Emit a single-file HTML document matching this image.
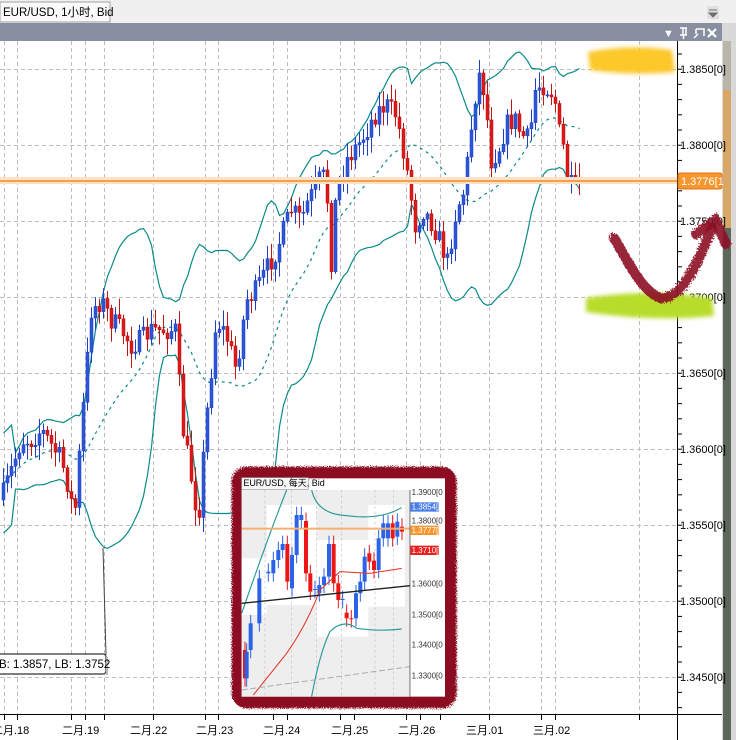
<!DOCTYPE html>
<html><head><meta charset="utf-8"><style>
html,body{margin:0;padding:0;width:736px;height:740px;overflow:hidden;background:#fff;font-family:"Liberation Sans","Noto Sans CJK SC",sans-serif}
svg{display:block}
text{font-family:"Liberation Sans","Noto Sans CJK SC",sans-serif}
</style></head><body>
<svg id="s" width="736" height="740" viewBox="0 0 736 740" xmlns="http://www.w3.org/2000/svg">
<defs>
<filter id="rough" x="-10%" y="-10%" width="120%" height="120%"><feTurbulence type="fractalNoise" baseFrequency="0.6" numOctaves="2" seed="3"/><feDisplacementMap in="SourceGraphic" scale="6"/></filter>
<filter id="rough2" x="-10%" y="-10%" width="120%" height="120%"><feTurbulence type="fractalNoise" baseFrequency="0.35" numOctaves="2" seed="5"/><feDisplacementMap in="SourceGraphic" scale="22"/></filter>
<filter id="blur"><feGaussianBlur stdDeviation="2"/></filter>
</defs>
<rect x="0" y="0" width="736" height="23" fill="#f0f0f0"/>
<rect x="0" y="2" width="110" height="20" fill="#fafafa" stroke="#a0a0a0"/>
<text x="3" y="16" font-size="11.5" fill="#000">EUR/USD, 1小时, Bid</text>
<rect x="707" y="6" width="12" height="13" fill="#e0e0e0"/>
<path d="M709 10h8M709 13h8l-4 4z" stroke="#707070" fill="#707070"/>
<rect x="0" y="23" width="724" height="18" fill="#878fa0"/>
<text x="663" y="37" font-size="11" fill="#fff">▼</text>
<path d="M680 28h7M683 28v7M686 28v7M680 35h7M683.5 35v4" stroke="#fff" stroke-width="1.5" fill="none"/>
<path d="M696 29h8v7M696 29v5M694 38l4-4" stroke="#fff" stroke-width="1.5" fill="none"/>
<path d="M708 29l8 8M716 29l-8 8" stroke="#fff" stroke-width="2.2"/>
<rect x="722" y="23" width="14" height="717" fill="#d8d8d8"/>
<rect x="723" y="41" width="8" height="699" fill="#5e675c"/>
<rect x="723" y="41" width="8" height="50" fill="#b8b5ab"/>
<rect x="723" y="90" width="8" height="138" fill="#d9a765"/>
<g id="grid" stroke="#bdbdbd" stroke-dasharray="4,3" stroke-width="1"></g>
<g id="bands" fill="none" stroke="#0a8a88" stroke-width="1.2"></g>
<g id="candles"></g>
<rect x="0" y="177" width="678" height="7" fill="#fde0c8"/>
<line x1="0" y1="181" x2="678" y2="181" stroke="#f08a1c" stroke-width="1.5"/>
<line x1="677.5" y1="41" x2="677.5" y2="740" stroke="#000"/>
<line x1="0" y1="714.5" x2="722" y2="714.5" stroke="#000"/>
<g id="ticks" stroke="#000"></g>
<g font-size="11" fill="#000">
<text x="680" y="73">1.3850[0]</text>
<text x="680" y="149">1.3800[0]</text>
<text x="680" y="225">1.3750[0]</text>
<text x="680" y="301">1.3700[0]</text>
<text x="680" y="377">1.3650[0]</text>
<text x="680" y="453">1.3600[0]</text>
<text x="680" y="529">1.3550[0]</text>
<text x="680" y="605">1.3500[0]</text>
<text x="680" y="681">1.3450[0]</text>
</g>
<rect x="678" y="173" width="44" height="16" rx="2" fill="#f5962e" stroke="#e07410"/>
<text x="681" y="185" font-size="11" fill="#fff">1.3776[1</text>
<g font-size="11" fill="#000">
<text x="-8" y="734">二月.18</text>
<text x="62" y="734">二月.19</text>
<text x="130" y="734">二月.22</text>
<text x="196" y="734">二月.23</text>
<text x="263" y="734">二月.24</text>
<text x="331" y="734">二月.25</text>
<text x="398" y="734">二月.26</text>
<text x="466" y="734">三月.01</text>
<text x="533" y="734">三月.02</text>
</g>
<line x1="103" y1="548" x2="106" y2="655" stroke="#444"/>
<rect x="-6" y="654" width="112" height="20" rx="3" fill="#fff" stroke="#333" stroke-width="1.2"/>
<rect x="106" y="657" width="2" height="18" fill="#bbb"/>
<text x="-1" y="668" font-size="11.5" fill="#000">B: 1.3857, LB: 1.3752</text>
<g filter="url(#blur)">
<path d="M588 52 Q630 44 672 50 L675 72 Q630 76 590 70 Z" fill="#fcc82a"/>
<path d="M586 298 Q650 288 712 298 L714 316 Q650 322 586 312 Z" fill="#b8dc2a"/>
</g>
<g filter="url(#rough)">
<path d="M614 238 C625 255 640 290 660 298 C680 300 695 270 712 228" fill="none" stroke="#8c0a22" stroke-width="10" stroke-linecap="round" opacity="0.9"/>
<path d="M696 234 L715 220 L726 244" fill="none" stroke="#8c0a22" stroke-width="10" stroke-linecap="round" opacity="0.9"/>
</g>
<g transform="translate(230,465) scale(0.3333)">
<rect x="5" y="5" width="675" height="725" rx="45" fill="#8c0a22" filter="url(#rough2)"/>
<rect x="35" y="40" width="610" height="655" fill="#fff"/>
<rect x="35" y="75" width="505" height="620" fill="#eeeeee"/>
<rect x="110" y="120" width="150" height="300" fill="#fff"/>
<rect x="260" y="225" width="155" height="290" fill="#fff"/>
<rect x="35" y="280" width="75" height="170" fill="#fff"/>
<rect x="415" y="120" width="110" height="305" fill="#fff"/>
<g stroke="#c0c0c0" stroke-dasharray="8,8" stroke-width="2">
<line x1="105" y1="75" x2="105" y2="695"/><line x1="185" y1="75" x2="185" y2="695"/><line x1="260" y1="75" x2="260" y2="695"/><line x1="335" y1="75" x2="335" y2="695"/><line x1="435" y1="75" x2="435" y2="695"/><line x1="490" y1="75" x2="490" y2="695"/>
</g>
<rect x="35" y="38" width="200" height="35" fill="#f6f6f6" stroke="#999" stroke-width="2"/>
<text x="40" y="63" font-size="27" fill="#000">EUR/USD, 每天, Bid</text>
<g id="inset"></g>
<path d="M35 445 Q120 200 170 75" fill="none" stroke="#2a9a98" stroke-width="3.5"/>
<path d="M245 75 Q260 140 330 150 L380 155 Q460 160 515 128" fill="none" stroke="#2a9a98" stroke-width="3.5"/>
<path d="M245 695 Q270 560 300 500 Q340 460 380 490 Q450 500 515 492" fill="none" stroke="#2a9a98" stroke-width="3.5"/>
<path d="M70 690 L170 565 Q230 480 270 375 L330 320 L420 325 L515 310" fill="none" stroke="#e03020" stroke-width="3"/>
<path d="M35 415 L540 362" stroke="#222" stroke-width="4"/>
<path d="M35 675 L540 605" stroke="#aaa" stroke-width="3" stroke-dasharray="18,8"/>
<rect x="35" y="188" width="505" height="6" fill="#f5b070"/>
<line x1="540" y1="75" x2="540" y2="695" stroke="#333" stroke-width="2"/>
<g font-size="24" fill="#333">
<text x="545" y="90">1.3900[0</text><text x="545" y="175">1.3800[0</text><text x="545" y="365">1.3600[0</text><text x="545" y="458">1.3500[0</text><text x="545" y="548">1.3400[0</text><text x="545" y="640">1.3300[0</text>
</g>
<rect x="541" y="112" width="85" height="28" fill="#4a7fe8"/><text x="545" y="134" font-size="24" fill="#fff">1.3854[8</text>
<rect x="541" y="182" width="85" height="28" fill="#f5962e"/><text x="545" y="204" font-size="24" fill="#fff">1.3777[1</text>
<rect x="541" y="242" width="85" height="28" fill="#e82020"/><text x="545" y="264" font-size="24" fill="#fff">1.3710[7</text>
</g>
</svg>
<script>
var NS="http://www.w3.org/2000/svg";
function el(p,t,a){var e=document.createElementNS(NS,t);for(var k in a)e.setAttribute(k,a[k]);p.appendChild(e);return e;}
var g=document.getElementById('grid');
[4,17,71,85,104,153,205,218,273,287,340,354,406,420,440,489,541,555,639].forEach(function(x){el(g,'line',{x1:x+.5,y1:41,x2:x+.5,y2:714});});
[69,145,221,297,373,449,525,601,677].forEach(function(y){el(g,'line',{x1:0,y1:y+.5,x2:677,y2:y+.5});});
var tk=document.getElementById('ticks');
for(var y=54;y<714;y+=15.2)el(tk,'line',{x1:677,y1:y,x2:682,y2:y});
[4,17,71,85,104,153,205,218,273,287,340,354,406,420,440,489,541,555,639].forEach(function(x){el(tk,'line',{x1:x+.5,y1:714,x2:x+.5,y2:720});});
var kp=[[0,500],[10,470],[20,440],[30,440],[40,430],[50,445],[60,460],[68,490],[73,520],[80,430],[90,310],[100,300],[110,320],[120,330],[130,345],[140,340],[150,330],[165,330],[175,330],[180,420],[188,465],[197,520],[205,420],[215,320],[225,335],[235,370],[245,300],[255,290],[265,270],[275,250],[290,210],[300,220],[305,205],[318,180],[325,175],[329,275],[335,190],[345,160],[360,140],[375,112],[385,105],[395,115],[405,165],[414,225],[422,210],[432,225],[440,245],[446,262],[455,210],[463,190],[469,135],[474,95],[479,70],[484,100],[490,160],[497,150],[505,125],[513,118],[520,135],[528,140],[534,90],[540,83],[548,90],[553,95],[559,140],[563,150],[567,185],[574,188],[580,182]];
function interp(x){for(var i=1;i<kp.length;i++){if(x<=kp[i][0]){var a=kp[i-1],b=kp[i];return a[1]+(b[1]-a[1])*(x-a[0])/(b[0]-a[0]);}}return kp[kp.length-1][1];}
var seed=7;function r(){seed=(seed*16807)%2147483647;return seed/2147483647;}
var cg=document.getElementById('candles');var closes=[],xs=[];var prev=interp(0);
for(var x=2;x<=578;x+=4){var c=interp(x)+(r()-.5)*22;var o=prev;var hi=Math.min(o,c)-r()*14-2,lo=Math.max(o,c)+r()*14+2;var up=c<o;
el(cg,'line',{x1:x+1.5,y1:hi,x2:x+1.5,y2:lo,stroke:up?'#1f3fc0':'#c01515','stroke-width':1});
el(cg,'rect',{x:x,y:Math.min(o,c),width:3,height:Math.max(1,Math.abs(c-o)),fill:up?'#2b56d8':'#e01818',stroke:up?'#1f3fc0':'#b01010','stroke-width':.5});
closes.push(c);xs.push(x+1.5);prev=c;}
var bg=document.getElementById('bands');var P=20,u='',l='',m='';
for(var i=0;i<closes.length;i++){var n=Math.min(P,i+1),s=0;for(var j=i-n+1;j<=i;j++)s+=closes[j];var mean=s/n,v=0;for(j=i-n+1;j<=i;j++)v+=(closes[j]-mean)*(closes[j]-mean);var sd=Math.sqrt(v/n);if(i<3)sd=25;
var pre=i?'L':'M';u+=pre+xs[i]+' '+(mean-2*sd).toFixed(1);l+=pre+xs[i]+' '+(mean+2*sd).toFixed(1);m+=pre+xs[i]+' '+mean.toFixed(1);}
el(bg,'path',{d:u});el(bg,'path',{d:l});el(bg,'path',{d:m,'stroke-dasharray':'3,4'});
var ins=document.getElementById('inset');
var ic=[[45,555,640,0],[50,640,560,1],[62,555,475,1],[88,475,340,1],[115,325,320,1],[130,325,285,1],[145,285,255,1],[158,255,237,1],[172,237,350,0],[186,370,270,1],[200,270,150,1],[214,165,150,1],[228,168,325,0],[241,325,380,0],[255,375,372,1],[268,385,360,1],[282,360,335,1],[297,335,237,1],[311,237,355,0],[325,355,405,0],[338,405,402,1],[350,443,460,0],[364,460,463,0],[378,460,385,1],[391,385,350,1],[404,350,275,1],[418,265,290,0],[432,287,315,0],[446,315,220,1],[460,220,175,1],[474,220,175,1],[488,175,220,0],[502,215,170,1],[516,185,200,0]];
ic.forEach(function(c){var t=Math.min(c[1],c[2]),b=Math.max(c[1],c[2]);var col=c[3]?'#2b62e8':'#ee1515';
el(ins,'line',{x1:c[0],y1:t-25,x2:c[0],y2:b+25,stroke:col,'stroke-width':3});
el(ins,'rect',{x:c[0]-6,y:t,width:12,height:Math.max(3,b-t),fill:col});});
</script>
</body></html>
